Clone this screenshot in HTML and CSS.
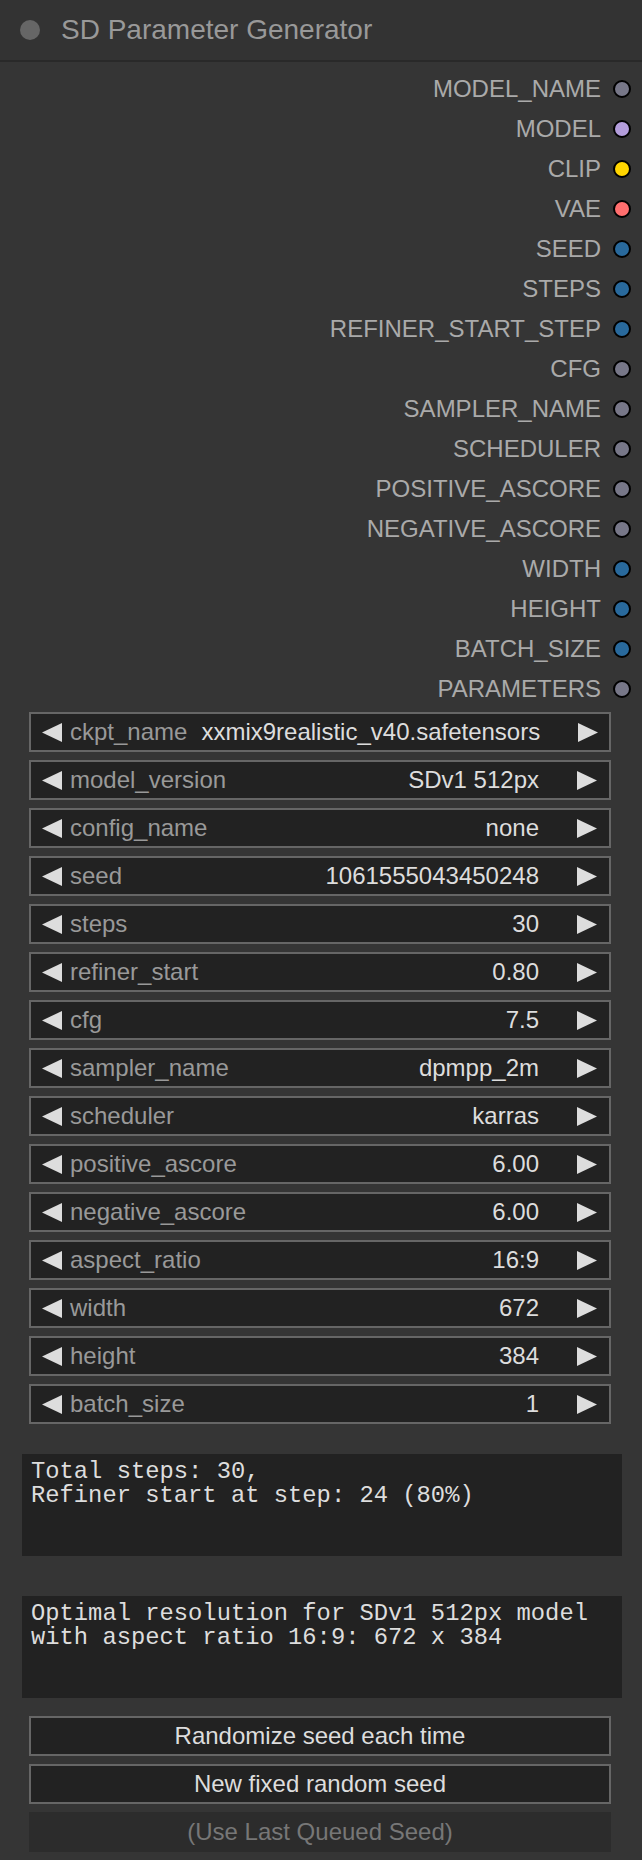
FILE: index.html
```html
<!DOCTYPE html>
<html>
<head>
<meta charset="utf-8">
<title>SD Parameter Generator</title>
<link rel="stylesheet" href="styles.css">
</head>
<body>
<div class="node">
  <header class="title">
    <span class="title-dot"></span>
    <span class="title-text">SD Parameter Generator</span>
  </header>

  <ul class="outputs">
    <li class="slot"><span class="slot-label">MODEL_NAME</span><span class="dot any"></span></li>
    <li class="slot"><span class="slot-label">MODEL</span><span class="dot model"></span></li>
    <li class="slot"><span class="slot-label">CLIP</span><span class="dot clip"></span></li>
    <li class="slot"><span class="slot-label">VAE</span><span class="dot vae"></span></li>
    <li class="slot"><span class="slot-label">SEED</span><span class="dot int"></span></li>
    <li class="slot"><span class="slot-label">STEPS</span><span class="dot int"></span></li>
    <li class="slot"><span class="slot-label">REFINER_START_STEP</span><span class="dot int"></span></li>
    <li class="slot"><span class="slot-label">CFG</span><span class="dot any"></span></li>
    <li class="slot"><span class="slot-label">SAMPLER_NAME</span><span class="dot any"></span></li>
    <li class="slot"><span class="slot-label">SCHEDULER</span><span class="dot any"></span></li>
    <li class="slot"><span class="slot-label">POSITIVE_ASCORE</span><span class="dot any"></span></li>
    <li class="slot"><span class="slot-label">NEGATIVE_ASCORE</span><span class="dot any"></span></li>
    <li class="slot"><span class="slot-label">WIDTH</span><span class="dot int"></span></li>
    <li class="slot"><span class="slot-label">HEIGHT</span><span class="dot int"></span></li>
    <li class="slot"><span class="slot-label">BATCH_SIZE</span><span class="dot int"></span></li>
    <li class="slot"><span class="slot-label">PARAMETERS</span><span class="dot any"></span></li>
  </ul>

  <div class="widgets">
    <div class="widget"><svg class="arrow" viewBox="0 0 20 19"><polygon points="20,0 0,9.5 20,19"/></svg><span class="w-name">ckpt_name</span><span class="w-value">xxmix9realistic_v40.safetensors</span><svg class="arrow" viewBox="0 0 20 19"><polygon points="0,0 20,9.5 0,19"/></svg></div>
    <div class="widget"><svg class="arrow" viewBox="0 0 20 19"><polygon points="20,0 0,9.5 20,19"/></svg><span class="w-name">model_version</span><span class="w-value">SDv1 512px</span><svg class="arrow" viewBox="0 0 20 19"><polygon points="0,0 20,9.5 0,19"/></svg></div>
    <div class="widget"><svg class="arrow" viewBox="0 0 20 19"><polygon points="20,0 0,9.5 20,19"/></svg><span class="w-name">config_name</span><span class="w-value">none</span><svg class="arrow" viewBox="0 0 20 19"><polygon points="0,0 20,9.5 0,19"/></svg></div>
    <div class="widget"><svg class="arrow" viewBox="0 0 20 19"><polygon points="20,0 0,9.5 20,19"/></svg><span class="w-name">seed</span><span class="w-value">1061555043450248</span><svg class="arrow" viewBox="0 0 20 19"><polygon points="0,0 20,9.5 0,19"/></svg></div>
    <div class="widget"><svg class="arrow" viewBox="0 0 20 19"><polygon points="20,0 0,9.5 20,19"/></svg><span class="w-name">steps</span><span class="w-value">30</span><svg class="arrow" viewBox="0 0 20 19"><polygon points="0,0 20,9.5 0,19"/></svg></div>
    <div class="widget"><svg class="arrow" viewBox="0 0 20 19"><polygon points="20,0 0,9.5 20,19"/></svg><span class="w-name">refiner_start</span><span class="w-value">0.80</span><svg class="arrow" viewBox="0 0 20 19"><polygon points="0,0 20,9.5 0,19"/></svg></div>
    <div class="widget"><svg class="arrow" viewBox="0 0 20 19"><polygon points="20,0 0,9.5 20,19"/></svg><span class="w-name">cfg</span><span class="w-value">7.5</span><svg class="arrow" viewBox="0 0 20 19"><polygon points="0,0 20,9.5 0,19"/></svg></div>
    <div class="widget"><svg class="arrow" viewBox="0 0 20 19"><polygon points="20,0 0,9.5 20,19"/></svg><span class="w-name">sampler_name</span><span class="w-value">dpmpp_2m</span><svg class="arrow" viewBox="0 0 20 19"><polygon points="0,0 20,9.5 0,19"/></svg></div>
    <div class="widget"><svg class="arrow" viewBox="0 0 20 19"><polygon points="20,0 0,9.5 20,19"/></svg><span class="w-name">scheduler</span><span class="w-value">karras</span><svg class="arrow" viewBox="0 0 20 19"><polygon points="0,0 20,9.5 0,19"/></svg></div>
    <div class="widget"><svg class="arrow" viewBox="0 0 20 19"><polygon points="20,0 0,9.5 20,19"/></svg><span class="w-name">positive_ascore</span><span class="w-value">6.00</span><svg class="arrow" viewBox="0 0 20 19"><polygon points="0,0 20,9.5 0,19"/></svg></div>
    <div class="widget"><svg class="arrow" viewBox="0 0 20 19"><polygon points="20,0 0,9.5 20,19"/></svg><span class="w-name">negative_ascore</span><span class="w-value">6.00</span><svg class="arrow" viewBox="0 0 20 19"><polygon points="0,0 20,9.5 0,19"/></svg></div>
    <div class="widget"><svg class="arrow" viewBox="0 0 20 19"><polygon points="20,0 0,9.5 20,19"/></svg><span class="w-name">aspect_ratio</span><span class="w-value">16:9</span><svg class="arrow" viewBox="0 0 20 19"><polygon points="0,0 20,9.5 0,19"/></svg></div>
    <div class="widget"><svg class="arrow" viewBox="0 0 20 19"><polygon points="20,0 0,9.5 20,19"/></svg><span class="w-name">width</span><span class="w-value">672</span><svg class="arrow" viewBox="0 0 20 19"><polygon points="0,0 20,9.5 0,19"/></svg></div>
    <div class="widget"><svg class="arrow" viewBox="0 0 20 19"><polygon points="20,0 0,9.5 20,19"/></svg><span class="w-name">height</span><span class="w-value">384</span><svg class="arrow" viewBox="0 0 20 19"><polygon points="0,0 20,9.5 0,19"/></svg></div>
    <div class="widget"><svg class="arrow" viewBox="0 0 20 19"><polygon points="20,0 0,9.5 20,19"/></svg><span class="w-name">batch_size</span><span class="w-value">1</span><svg class="arrow" viewBox="0 0 20 19"><polygon points="0,0 20,9.5 0,19"/></svg></div>
  </div>

  <div class="readout readout-steps">Total steps: 30,
Refiner start at step: 24 (80%)</div>
  <div class="readout readout-res">Optimal resolution for SDv1 512px model
with aspect ratio 16:9: 672 x 384</div>

  <div class="buttons">
    <button class="btn">Randomize seed each time</button>
    <button class="btn">New fixed random seed</button>
    <button class="btn btn-disabled">(Use Last Queued Seed)</button>
  </div>
</div>
</body>
</html>
```

FILE: styles.css
```css
html, body {
  margin: 0;
  padding: 0;
  background: #353535;
}

body {
  width: 642px;
  height: 1860px;
  overflow: hidden;
  font-family: "Liberation Sans", Arial, sans-serif;
}

.node {
  display: flex;
  flex-direction: column;
  background: #353535;
}

.title {
  height: 60px;
  display: flex;
  align-items: center;
  background: #333333;
  border-bottom: 2px solid #292929;
}

.title-dot {
  width: 20px;
  height: 20px;
  border-radius: 50%;
  background: #666666;
  margin-left: 20px;
}

.title-text {
  margin-left: 21px;
  font-size: 28px;
  color: #999999;
  line-height: 1;
}

.outputs {
  list-style: none;
  margin: 0;
  padding: 7px 11px 0 0;
  display: flex;
  flex-direction: column;
}

.slot {
  height: 40px;
  display: flex;
  align-items: center;
  justify-content: flex-end;
  gap: 12px;
}

.slot-label {
  font-size: 24px;
  color: #aaaaaa;
  line-height: 1;
}

.dot {
  width: 14px;
  height: 14px;
  border-radius: 50%;
  border: 2px solid #000000;
  box-sizing: content-box;
}

.dot.any { background: #777788; }
.dot.model { background: #b39ddb; }
.dot.clip { background: #ffd500; }
.dot.vae { background: #ff6e6e; }
.dot.int { background: #29699c; }

.widgets {
  display: flex;
  flex-direction: column;
  gap: 8px;
  padding: 3px 0 0 29px;
}

.widget {
  width: 582px;
  height: 40px;
  box-sizing: border-box;
  border: 2px solid #666666;
  background: #222222;
  display: flex;
  align-items: center;
  padding: 0 12px 0 11px;
  font-size: 24px;
  line-height: 1;
}

.arrow {
  width: 20px;
  height: 19px;
  fill: #dddddd;
  flex: none;
}

.w-name {
  margin-left: 8px;
  color: #999999;
  white-space: nowrap;
}

.w-value {
  flex: 1;
  text-align: right;
  margin: 0 38px 0 14px;
  color: #dddddd;
  white-space: nowrap;
}

.readout {
  width: 600px;
  height: 102px;
  box-sizing: border-box;
  margin-left: 22px;
  background: #222222;
  color: #dddddd;
  font-family: "Liberation Mono", "Courier New", monospace;
  font-size: 23.8px;
  line-height: 24px;
  padding: 6px 9px;
  white-space: pre;
}

.readout-steps {
  margin-top: 30px;
}

.readout-res {
  margin-top: 40px;
}

.buttons {
  display: flex;
  flex-direction: column;
  gap: 8px;
  padding: 18px 0 0 29px;
}

.btn {
  width: 582px;
  height: 40px;
  box-sizing: border-box;
  border: 2px solid #666666;
  background: #222222;
  color: #dddddd;
  font-family: "Liberation Sans", Arial, sans-serif;
  font-size: 24px;
  line-height: 1;
  padding: 0;
  margin: 0;
}

.btn-disabled {
  border-color: #2c2c2c;
  background: #2c2c2c;
  color: #777777;
}
```
